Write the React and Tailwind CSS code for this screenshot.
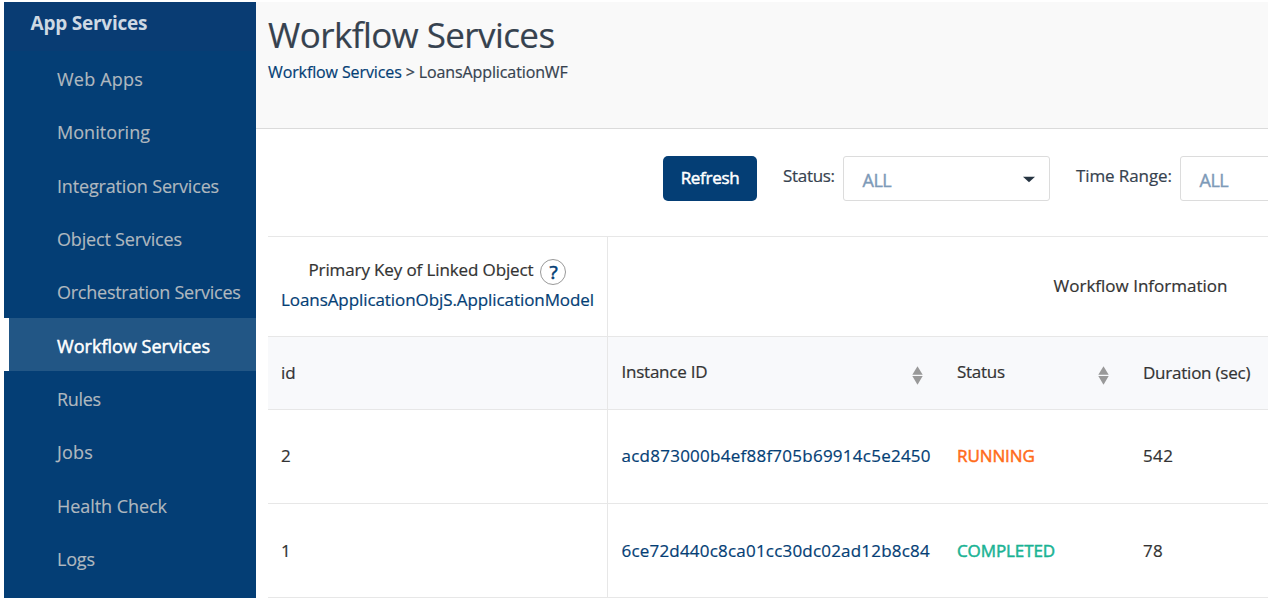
const NAV = [
  { label: "Web Apps", track: "tracking-[0.2px]" },
  { label: "Monitoring", track: "tracking-[0.05px]" },
  { label: "Integration Services", track: "tracking-[-0.17px]" },
  { label: "Object Services", track: "tracking-[-0.18px]" },
  { label: "Orchestration Services", track: "tracking-[-0.25px]" },
  { label: "Workflow Services", track: "tracking-[0.03px]", active: true },
  { label: "Rules", track: "tracking-[-0.3px]" },
  { label: "Jobs", track: "tracking-[0.2px]" },
  { label: "Health Check", track: "tracking-[-0.06px]" },
  { label: "Logs", track: "tracking-[-0.19px]" },
];

const ROWS = [
  { id: "2", instance: "acd873000b4ef88f705b69914c5e2450", track: "tracking-[0.25px]", status: "RUNNING", color: "text-[#ff6c1a] tracking-[-0.1px]", duration: "542", pad: "pb-[2px]" },
  { id: "1", instance: "6ce72d440c8ca01cc30dc02ad12b8c84", track: "tracking-[0.2px]", status: "COMPLETED", color: "text-[#1ab394] tracking-[-0.1px]", duration: "78", pad: "" },
];

const COLS = "grid grid-cols-[340px_336px_186px_543px]";

function Sidebar() {
  return (
    <nav className="flex h-[596px] w-[252px] shrink-0 flex-col bg-[#043e75]">
      <div className="flex h-[49.3px] shrink-0 items-start bg-[#093c73] pl-[26.5px] pt-[8px] text-[19px] leading-[26px] font-bold tracking-[-0.22px] text-[#ced9e3]">
        App Services
      </div>
      {NAV.map((n) => (
        <a
          key={n.label}
          className={`flex h-[53.33px] shrink-0 items-center pt-[3px] text-[18px] whitespace-nowrap ${n.track} ${
            n.active
              ? "border-l-[5px] border-white bg-[#225685] pl-[48px] text-white [-webkit-text-stroke:0.5px]"
              : "pl-[53px] text-[#b0b8bf] [-webkit-text-stroke:0.15px]"
          }`}
        >
          {n.label}
        </a>
      ))}
    </nav>
  );
}

function SortIcon() {
  return (
    <svg width="11" height="19" viewBox="0 0 11 19" className="mt-[6px] shrink-0 fill-[#999]">
      <path d="M5.5 0.3 10.7 8.8H0.3Z" />
      <path d="M0.3 10H10.7L5.5 18.7Z" />
    </svg>
  );
}

function Select({ width, labelClass, label }) {
  return (
    <div className="flex items-start">
      <span className={`shrink-0 pt-[8px] text-[17px] leading-[23px] text-[#36424f] ${labelClass}`}>{label}</span>
      <div className={`flex h-[45px] shrink-0 items-center justify-between rounded-[3px] border border-[#dcdcdc] pt-[4px] pr-[13px] pl-[18.5px] ${width}`}>
        <span className="text-[18px] tracking-[-0.5px] text-[#7d9ab8] [-webkit-text-stroke:0.4px]">ALL</span>
        <svg width="14" height="7" viewBox="0 0 14 7" className="mb-[3px] fill-[#263442]">
          <path d="M1 0.8H13L7 6.3Z" />
        </svg>
      </div>
    </div>
  );
}

export default function App() {
  return (
    <div className="flex h-[598px] w-[1268px] overflow-hidden bg-white pt-[2px] pl-[4px] font-['Open_Sans','Noto_Sans',sans-serif]">
      <Sidebar />
      <main className="min-w-0 flex-1 overflow-hidden [-webkit-text-stroke:0.2px]">
        <header className="h-[127px] border-b border-[#dbdbdb] bg-[#f9f9f9] pl-[12px] text-[#36424f]">
          <h1 className="pt-[9px] text-[35px] leading-[48px] tracking-[-0.59px]">Workflow Services</h1>
          <div className="pt-px text-[16px] leading-[24px] tracking-[-0.11px]">
            <a className="text-[#043e75]">Workflow Services</a> &gt; LoansApplicationWF
          </div>
        </header>

        <div className="flex h-[107px] items-start pt-[27px] pl-[407px] whitespace-nowrap">
          <button className="h-[45px] w-[94px] shrink-0 rounded-[5px] bg-[#043e75] pb-[2px] text-[17px] tracking-[-0.3px] text-white [-webkit-text-stroke:0.5px]">
            Refresh
          </button>
          <div className="shrink-0 pl-[26px]">
            <Select label="Status:" labelClass="w-[60px] tracking-[-0.3px]" width="w-[207px]" />
          </div>
          <div className="shrink-0 pl-[26px]">
            <Select label="Time Range:" labelClass="w-[104px] tracking-[-0.1px]" width="w-[207px]" />
          </div>
        </div>

        <section className="ml-[12px] w-[1405px] text-[17px] whitespace-nowrap text-[#333] [&>div]:border-t [&>div]:border-[#e7e7e7]">
          <div className="grid h-[100px] grid-cols-[340px_1065px]">
            <div className="flex flex-col items-center border-r border-[#e7e7e7] pt-[18px]">
              <div className="flex h-[30px] items-center gap-[7px] tracking-[-0.12px]">
                <span>Primary Key of Linked Object</span>
                <span className="mt-[4px] flex size-[26px] items-center justify-center rounded-full border-[1.5px] border-[#999] text-[19px] text-[#043e75] [-webkit-text-stroke:0.6px]">
                  ?
                </span>
              </div>
              <a className="leading-[30px] tracking-[-0.08px] text-[#043e75]">LoansApplicationObjS.ApplicationModel</a>
            </div>
            <div className="flex items-center justify-center pb-[2px]">Workflow Information</div>
          </div>

          <div className={`h-[73px] bg-[#f8f9fb] ${COLS}`}>
            <div className="flex items-center border-r border-[#e7e7e7] pl-[13px]">id</div>
            <div className="flex items-center justify-between pr-[21px] pb-[2px] pl-[13.5px] tracking-[-0.24px]">
              <span>Instance ID</span>
              <SortIcon />
            </div>
            <div className="flex items-center justify-between pr-[21.5px] pb-[2px] pl-[13px] tracking-[-0.28px]">
              <span>Status</span>
              <SortIcon />
            </div>
            <div className="flex items-center pl-[13px] tracking-[-0.23px]">Duration (sec)</div>
          </div>

          {ROWS.map((r) => (
            <div key={r.id} className={`h-[94px] ${COLS}`}>
              <div className={`flex items-center border-r border-[#e7e7e7] pl-[13px] ${r.pad}`}>{r.id}</div>
              <a className={`flex items-center pl-[13.5px] text-[#043e75] ${r.track} ${r.pad}`}>{r.instance}</a>
              <div className={`flex items-center pl-[13px] [-webkit-text-stroke:0.5px] ${r.color} ${r.pad}`}>{r.status}</div>
              <div className={`flex items-center pl-[13px] tracking-[0.4px] ${r.pad}`}>{r.duration}</div>
            </div>
          ))}
          <div className="h-px" />
        </section>
      </main>
    </div>
  );
}
